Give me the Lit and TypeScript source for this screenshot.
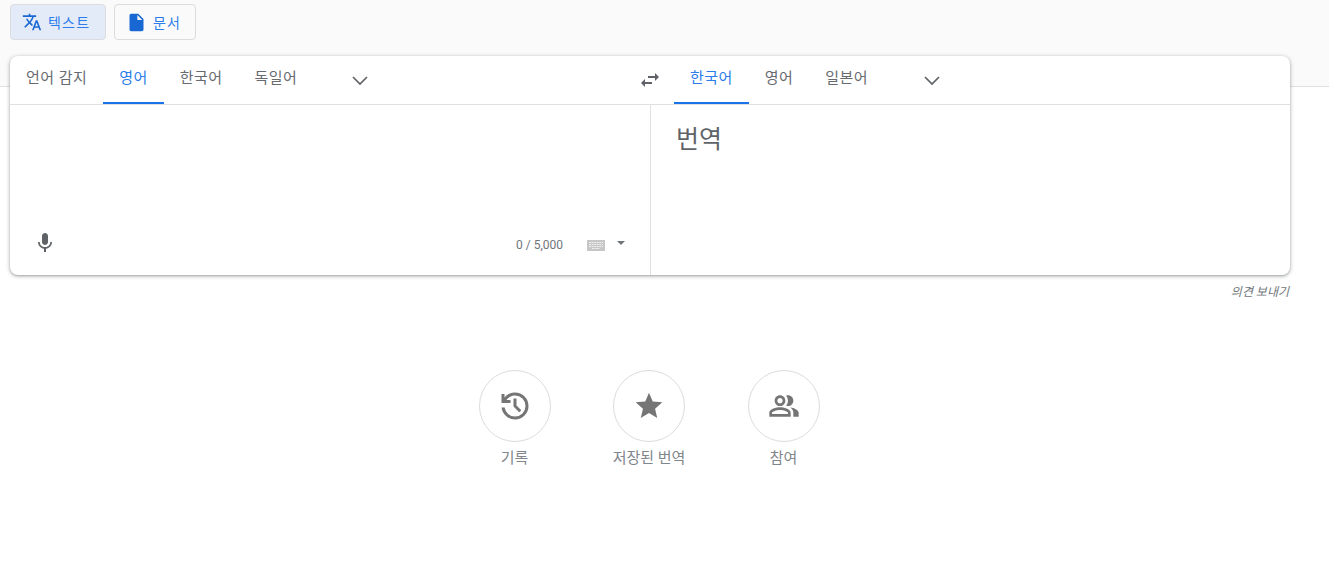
import { LitElement, html, css, svg } from "lit";
import { customElement } from "lit/decorators.js";

const icon = (size: number, cls: string, body: unknown, box = "0 0 24 24") =>
  html`<svg class=${cls} width=${size} height=${size} viewBox=${box} aria-hidden="true">${body}</svg>`;

const translateIcon = svg`<path d="M12.87 15.07l-2.54-2.51.03-.03A17.52 17.52 0 0 0 14.07 6H17V4h-7V2H8v2H1v1.99h11.17C11.5 7.92 10.44 9.75 9 11.35 8.07 10.32 7.3 9.19 6.69 8h-2c.73 1.63 1.73 3.17 2.98 4.56l-5.09 5.02L4 19l5-5 3.11 3.11.76-2.04zM18.5 10h-2L12 22h2l1.12-3h4.75L21 22h2l-4.5-12zm-2.62 7l1.62-4.33L19.12 17h-3.24z"/>`;
const docIcon = svg`<path d="M14 2H6c-1.1 0-2 .9-2 2v16c0 1.1.9 2 2 2h12c1.1 0 2-.9 2-2V8l-6-6zm-1 7V3.5L18.5 9H13z"/>`;
const chevron = svg`<path class="line" d="M5 9l7 7 7-7"/>`;
const swap = svg`<path d="M6.99 11L3 15l3.99 4v-3H14v-2H6.99v-3zM21 9l-3.99-4v3H10v2h7.01v3L21 9z"/>`;
const mic = svg`<path d="M12 14c1.66 0 3-1.34 3-3V5c0-1.66-1.34-3-3-3S9 3.34 9 5v6c0 1.66 1.34 3 3 3zm5.3-3c0 3-2.54 5.1-5.3 5.1S6.7 14 6.7 11H5c0 3.41 2.72 6.23 6 6.72V21h2v-3.28c3.28-.48 6-3.3 6-6.72h-1.7z"/>`;
const history = svg`<path d="M480-120q-138 0-240.5-91.5T122-440h82q14 104 92.5 172T480-200q117 0 198.5-81.5T760-480t-81.5-198.5T480-760q-69 0-129 32t-101 88h110v80H120v-240h80v94q51-64 124.5-99T480-840q150 0 255 105t105 255-105 255-255 105zm112-192L440-464v-216h80v184l128 128-56 56z"/>`;
const star = svg`<path d="M12 17.27L18.18 21l-1.64-7.03L22 9.24l-7.19-.61L12 2 9.19 8.63 2 9.24l5.46 4.73L5.82 21z"/>`;
const people = svg`<path d="M16.67 13.13C18.04 14.06 19 15.32 19 17v3h4v-3c0-2.18-3.57-3.47-6.33-3.87zM15 12c2.21 0 4-1.79 4-4s-1.79-4-4-4c-.47 0-.91.1-1.33.24a5.98 5.98 0 0 1 0 7.52c.42.14.86.24 1.33.24zM9 12c2.21 0 4-1.79 4-4s-1.79-4-4-4-4 1.79-4 4 1.79 4 4 4zm0-6c1.1 0 2 .9 2 2s-.9 2-2 2-2-.9-2-2 .9-2 2-2zm0 7c-2.67 0-8 1.34-8 4v3h16v-3c0-2.66-5.33-4-8-4zm6 5H3v-.99C3.2 16.29 6.3 15 9 15s5.8 1.29 6 2v1z"/>`;

@customElement("app-root")
export class AppRoot extends LitElement {
  static styles = css`
    :host {
      display: block;
      height: 565px;
      overflow: hidden;
      background: #fff;
      font-family: Roboto, "Noto Sans CJK KR", sans-serif;
      color: #5f6368;
    }
    svg { display: block; fill: currentColor; flex: none; }
    .line { fill: none; stroke: currentColor; stroke-width: 1.7; }

    .top {
      height: 86px;
      background: #fafafa;
      border-bottom: 1px solid #e0e0e0;
      padding-left: 10px;
    }
    .modes { display: flex; gap: 8px; padding-top: 4px; }
    .mode {
      box-sizing: border-box;
      height: 36px;
      display: flex;
      align-items: center;
      border: 1px solid #dadce0;
      border-radius: 4px;
      color: #2b7de9;
      font-size: 14px;
      letter-spacing: 1.2px;
    }
    .mode.text { width: 96px; padding-left: 11px; gap: 6px; background: #e4ebf8; }
    .mode.doc { width: 82px; padding-left: 11px; gap: 6px; }
    .mode .ic { color: #1967d2; }

    .card {
      box-sizing: border-box;
      width: 1280px;
      height: 219px;
      margin: -31px 0 0 10px;
      background: #fff;
      border-radius: 8px;
      box-shadow: 0 1px 4px 0 rgba(60, 64, 67, 0.4), 0 1px 2px rgba(60, 64, 67, 0.2);
      display: flex;
      flex-direction: column;
    }
    .bar {
      height: 48px;
      flex: none;
      display: flex;
      border-bottom: 1px solid #e0e0e0;
    }
    .side { display: flex; align-items: stretch; }
    .side.left { width: 640px; }
    .tab {
      box-sizing: border-box;
      height: 48px;
      padding: 12px 16px 0;
      font-size: 15px;
      line-height: 20px;
      letter-spacing: 0.45px;
      white-space: nowrap;
      color: #676b70;
      border-bottom: 2px solid transparent;
    }
    .tab.on { color: #2b7de9; border-bottom-color: #1a73e8; }
    .chev { margin: 12px 0 0 35px; }
    .right .chev { margin-left: 36px; }
    .swap { margin: 12px 12px 0 -12px; }

    .panes { flex: 1; display: flex; }
    .src {
      width: 641px;
      box-sizing: border-box;
      border-right: 1px solid #e0e0e0;
      display: flex;
      align-items: flex-end;
      padding: 0 0 19px 23px;
    }
    .mic { margin-bottom: 1px; }
    .count {
      margin-left: auto;
      font-size: 12px;
      line-height: 16px;
      margin-bottom: 3px;
      color: #70757a;
    }
    .kbd { margin: 0 0 5px 24px; color: #c6c6c6; }
    .keys { fill: none; stroke: #eeeeee; stroke-width: 1; stroke-dasharray: 2 0.6; }
    .caret {
      width: 0; height: 0;
      border: 4px solid transparent;
      border-top: 4px solid #70757a;
      border-bottom: 0;
      margin: 0 25px 11px 12px;
    }
    .dst {
      flex: 1;
      padding: 19px 0 0 25px;
      font-size: 25px;
      line-height: 32px;
      color: #5f6368;
    }

    .feedback {
      width: 1279px;
      margin: 9px 0 0 10px;
      text-align: right;
      font-size: 12px;
      line-height: 16px;
      font-style: italic;
      color: #70757a;
    }

    .actions {
      display: grid;
      grid-template-columns: 72px 72px 72px;
      column-gap: 62.5px;
      justify-content: center;
      margin: 70px 0 0 -31px;
    }
    .action { display: flex; flex-direction: column; align-items: center; }
    .circle {
      box-sizing: border-box;
      width: 72px;
      height: 72px;
      border: 1px solid #dadce0;
      border-radius: 50%;
      display: flex;
      align-items: center;
      justify-content: center;
      color: #757575;
    }
    .label {
      margin-top: 6px;
      font-size: 15px;
      line-height: 20px;
      white-space: nowrap;
      color: #80868b;
    }
  `;

  render() {
    return html`
      <div class="top">
        <div class="modes">
          <div class="mode text">${icon(20, "ic", translateIcon)}<span>텍스트</span></div>
          <div class="mode doc">${icon(21, "ic", docIcon)}<span>문서</span></div>
        </div>
      </div>
      <div class="card">
        <div class="bar">
          <div class="side left">
            <div class="tab">언어 감지</div>
            <div class="tab on">영어</div>
            <div class="tab">한국어</div>
            <div class="tab">독일어</div>
            ${icon(24, "chev", chevron)}
          </div>
          <div class="side right">
            ${icon(24, "swap", swap)}
            <div class="tab on">한국어</div>
            <div class="tab">영어</div>
            <div class="tab">일본어</div>
            ${icon(24, "chev", chevron)}
          </div>
        </div>
        <div class="panes">
          <div class="src">
            ${icon(24, "mic", mic)}
            <div class="count">0 / 5,000</div>
            <svg class="kbd" width="18" height="11" viewBox="0 0 18 11" aria-hidden="true">
              <path d="M0 0h18v11H0z" />
              <path class="keys" d="M2 2.5h14M2 4.5h14M2 6.5h14M5 8.5h8" />
            </svg>
            <div class="caret"></div>
          </div>
          <div class="dst">번역</div>
        </div>
      </div>
      <div class="feedback">의견 보내기</div>
      <div class="actions">
        <div class="action"><div class="circle">${icon(36, "", history, "0 -960 960 960")}</div><div class="label">기록</div></div>
        <div class="action"><div class="circle">${icon(32, "", star)}</div><div class="label">저장된 번역</div></div>
        <div class="action"><div class="circle">${icon(32, "", people)}</div><div class="label">참여</div></div>
      </div>
    `;
  }
}
